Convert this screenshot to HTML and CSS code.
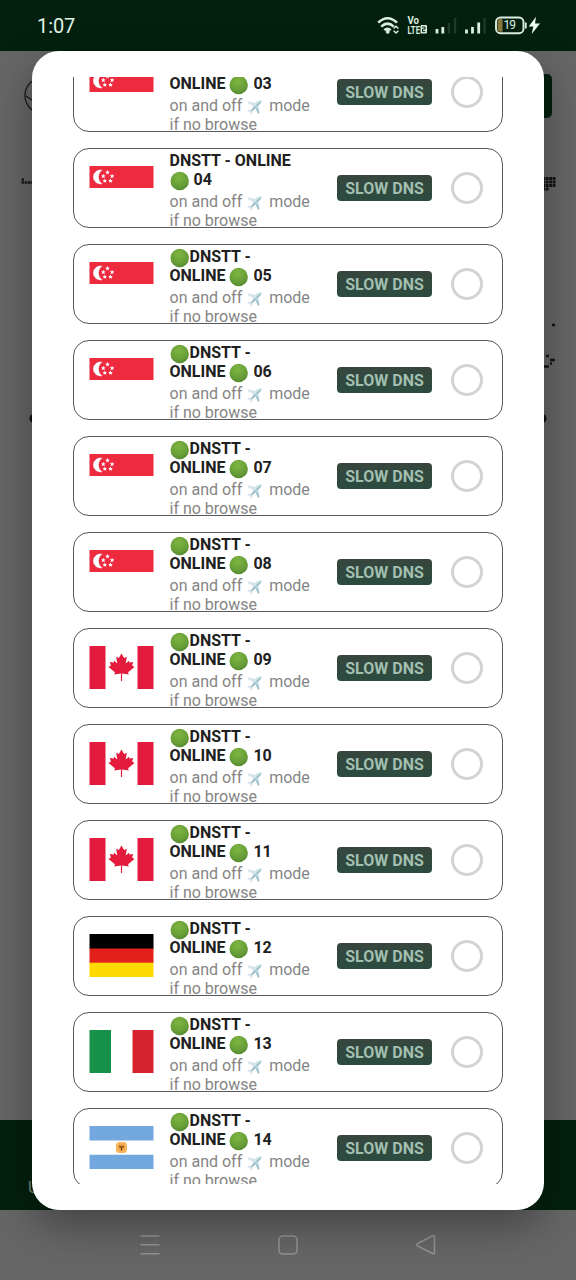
FILE: index.html
```html
<!DOCTYPE html>
<html lang="en">
<head>
<meta charset="utf-8">
<title>Servers</title>
<link rel="stylesheet" href="styles.css">
</head>
<body>
<svg class="defs" aria-hidden="true">
  <defs>
    <radialGradient id="green" cx=".45" cy=".3" r=".75"><stop offset="0" stop-color="#7fb53f"/><stop offset=".6" stop-color="#68a038"/><stop offset="1" stop-color="#54882f"/></radialGradient>
    <symbol id="dot" viewBox="0 0 20 20"><circle cx="9.700" cy="10" r="9.2" fill="url(#green)"/></symbol>
    <symbol id="plane" viewBox="0 0 17 17"><path d="M2 2.400L9 3.700L12.800 1.800Q15 .8 16 1.500Q16.500 2.600 15 4.200L12.700 7L13.800 14L12.300 15.500L9.400 10L6.300 12.600L6.200 15L5.200 15.600L4.200 13.200L1.500 12L2.200 11L4.700 11L7.300 7.200L2 4Z" fill="#cfe3e8"/><path d="M5.500 11.700L14.500 2.900M10.500 9L12.800 14.200" fill="none" stroke="#93b6c0" stroke-width="1.200"/></symbol>
    <symbol id="sg" viewBox="0 0 64 43"><rect width="64" height="22" fill="#ee2b3e"/><path d="M13 4 A7.3 7.3 0 1 0 13 18 A8.3 8.3 0 0 1 13 4Z" fill="#fff"/><g fill="#fff"><path id="st" d="M18 4.100l.65 1.500 1.600.15-1.200 1.100.4 1.600L18 7.600l-1.450.85.4-1.600-1.200-1.100 1.600-.15z"/><use href="#st" x="-4.2" y="3.7"/><use href="#st" x="4.6" y="3.7"/><use href="#st" x="-2.7" y="8.4"/><use href="#st" x="3" y="8.4"/></g></symbol>
    <symbol id="ca" viewBox="0 0 64 43"><rect width="64" height="43" fill="#fff"/><path d="M0 0H16V43H0zM48 0H64V43H48z" fill="#e31c3d"/><path d="M32 7.5L34.6 12L37.3 10.8L36.2 17.5L39.4 14.7L40 16.5L43.7 16L42.6 19.5L45 21L38.6 26.3L39.2 28.5L32.6 27.6V35H31.4V27.6L24.8 28.5L25.4 26.3L19 21L21.4 19.5L20.3 16L24 16.5L24.6 14.7L27.8 17.5L26.7 10.8L29.4 12Z" fill="#e31c3d"/></symbol>
    <symbol id="de" viewBox="0 0 64 43"><rect width="64" height="15" fill="#000"/><rect y="14.5" width="64" height="14.5" fill="#e2211c"/><rect y="28.7" width="64" height="14.3" fill="#ffda00"/></symbol>
    <symbol id="it" viewBox="0 0 64 43"><rect width="64" height="43" fill="#fff"/><rect width="21.5" height="43" fill="#159149"/><rect x="43" width="21" height="43" fill="#d7232e"/></symbol>
    <symbol id="ar" viewBox="0 0 64 43"><rect width="64" height="43" fill="#fff"/><path d="M0 0H64V14.5H0zM0 28.7H64V43H0z" fill="#72a8dd"/><rect x="26.5" y="16" width="11" height="11" rx="3.5" fill="#f6b55c"/><circle cx="32" cy="21.5" r="3.3" fill="#eb9f3c"/><path d="M29.6 20L32 21.5L34.4 20M32 21.5V24.6" fill="none" stroke="#783f18" stroke-width="1.1"/></symbol>
  </defs>
</svg>

<div class="screen">
  <header class="status">
    <span class="clock">1:07</span>
    <svg class="indicators" viewBox="0 0 164 20" width="164" height="20" aria-hidden="true">
      <g fill="none" stroke="#dcefe2" stroke-width="2.5">
        <path d="M1.2 6.700Q10.5 -2.300 20 6.700M4.2 10.600Q10.5 4.600 16.8 10.600M7.3 14.1Q10.5 11.300 13.7 14.1"/>
      </g>
      <circle cx="10.700" cy="15.700" r="2" fill="#dcefe2"/>
      <path d="M16.600 12.500L19 10.200L21.400 12.500M16.600 14.700L19 17L21.400 14.700" fill="none" stroke="#dcefe2" stroke-width="1.5"/>
      <g fill="#dcefe2" class="volte"><text x="30.5" y="8" textLength="11.500" lengthAdjust="spacingAndGlyphs">Vo</text><text x="30.500" y="17.5" textLength="12.500" lengthAdjust="spacingAndGlyphs">LTE</text></g>
      <rect x="43.5" y="9" width="6.500" height="8.5" rx="1" fill="#dcefe2"/>
      <path d="M45 11H48V13.2H45.5V15.6H48.300" fill="none" stroke="#03200e" stroke-width="1"/>
      <path d="M60 13V17.5M65.800 11V17.5M89.500 13.500V17.5M95.500 11V17.5M101.700 6.500V17.5" stroke="#dcefe2" stroke-width="2.8"/>
      <path d="M72 7V17.5M78 2V17.5M107.500 2V17.5" stroke="#203a2b" stroke-width="2.4"/>
      <rect x="119" y="1.500" width="27.500" height="15.700" rx="4.500" fill="none" stroke="#dcefe2" stroke-width="1.900"/>
      <path d="M125.500 3H123.300Q120.500 3 120.500 6V13Q120.500 15.700 123.300 15.700H125.500Z" fill="#8a793f"/>
      <path d="M148.800 6.500V12.500" stroke="#dcefe2" stroke-width="1.800"/>
      <text x="126.500" y="13.200" class="charge" fill="#dcefe2" textLength="12.500">19</text>
      <path d="M159 .8L151.700 10.500H156.300L154.700 18L163 7.500H158Z" fill="#eefff3"/>
    </svg>
  </header>

  <main class="page">
    <svg class="backdrop" viewBox="0 0 576 1069" width="576" height="1069" aria-hidden="true">
      <g fill="none" stroke="#171717" stroke-width="1.200"><circle cx="43" cy="44.500" r="18"/><path d="M26 45Q32 49 40 54"/></g>
      <rect x="500" y="23" width="52" height="44" rx="5" fill="#03200e"/>
      <path d="M21.500 128.500H24M21.500 131.500H34" stroke="#191919" stroke-width="2.600" stroke-dasharray="2.600 .6"/>
      <path d="M542 127.500H555.500M542 131H555.500M542 134.500H555.500M542 138H549" stroke="#141414" stroke-width="3" stroke-dasharray="3 .6"/>
      <path d="M552 274H555M546 305H549M550 309H555M550 312.500H552M543 315.500H549" stroke="#141414" stroke-width="2.600"/>
      <circle cx="34" cy="367.500" r="4.500" fill="#111"/><circle cx="542" cy="367.500" r="4.500" fill="#111"/>
    </svg>
  </main>
  <footer class="bottombar"><span>U</span></footer>
  <nav class="sysnav">
    <svg width="20" height="20" viewBox="0 0 20 20"><path d="M.5 1H19.500M.5 9.800H19.500M.5 18.700H19.500"/></svg>
    <svg width="20" height="20" viewBox="0 0 20 20"><rect x="1" y="1" width="18" height="18" rx="4"/></svg>
    <svg width="20" height="20" viewBox="0 0 20 20"><path d="M1.300 8.800L16.500 .8Q18.500 .3 18.500 2V17.500Q18.500 19.500 16.500 18.500L1.300 10.800Q.3 9.800 1.300 8.800Z"/></svg>
  </nav>

  <section class="dialog">
    <div class="list">
      <article class="card"><svg class="flag"><use href="#sg"/></svg><div class="info"><h2><span><svg class="dot"><use href="#dot"/></svg>DNSTT -</span><span>ONLINE <svg class="dot"><use href="#dot"/></svg> 03</span></h2><p><span>on and off <svg class="plane"><use href="#plane"/></svg> mode</span><span>if no browse</span></p></div><b class="tag">SLOW DNS</b><i class="radio"></i></article>
      <article class="card"><svg class="flag"><use href="#sg"/></svg><div class="info"><h2><span>DNSTT - ONLINE</span><span><svg class="dot"><use href="#dot"/></svg> 04</span></h2><p><span>on and off <svg class="plane"><use href="#plane"/></svg> mode</span><span>if no browse</span></p></div><b class="tag">SLOW DNS</b><i class="radio"></i></article>
      <article class="card"><svg class="flag"><use href="#sg"/></svg><div class="info"><h2><span><svg class="dot"><use href="#dot"/></svg>DNSTT -</span><span>ONLINE <svg class="dot"><use href="#dot"/></svg> 05</span></h2><p><span>on and off <svg class="plane"><use href="#plane"/></svg> mode</span><span>if no browse</span></p></div><b class="tag">SLOW DNS</b><i class="radio"></i></article>
      <article class="card"><svg class="flag"><use href="#sg"/></svg><div class="info"><h2><span><svg class="dot"><use href="#dot"/></svg>DNSTT -</span><span>ONLINE <svg class="dot"><use href="#dot"/></svg> 06</span></h2><p><span>on and off <svg class="plane"><use href="#plane"/></svg> mode</span><span>if no browse</span></p></div><b class="tag">SLOW DNS</b><i class="radio"></i></article>
      <article class="card"><svg class="flag"><use href="#sg"/></svg><div class="info"><h2><span><svg class="dot"><use href="#dot"/></svg>DNSTT -</span><span>ONLINE <svg class="dot"><use href="#dot"/></svg> 07</span></h2><p><span>on and off <svg class="plane"><use href="#plane"/></svg> mode</span><span>if no browse</span></p></div><b class="tag">SLOW DNS</b><i class="radio"></i></article>
      <article class="card"><svg class="flag"><use href="#sg"/></svg><div class="info"><h2><span><svg class="dot"><use href="#dot"/></svg>DNSTT -</span><span>ONLINE <svg class="dot"><use href="#dot"/></svg> 08</span></h2><p><span>on and off <svg class="plane"><use href="#plane"/></svg> mode</span><span>if no browse</span></p></div><b class="tag">SLOW DNS</b><i class="radio"></i></article>
      <article class="card"><svg class="flag"><use href="#ca"/></svg><div class="info"><h2><span><svg class="dot"><use href="#dot"/></svg>DNSTT -</span><span>ONLINE <svg class="dot"><use href="#dot"/></svg> 09</span></h2><p><span>on and off <svg class="plane"><use href="#plane"/></svg> mode</span><span>if no browse</span></p></div><b class="tag">SLOW DNS</b><i class="radio"></i></article>
      <article class="card"><svg class="flag"><use href="#ca"/></svg><div class="info"><h2><span><svg class="dot"><use href="#dot"/></svg>DNSTT -</span><span>ONLINE <svg class="dot"><use href="#dot"/></svg> 10</span></h2><p><span>on and off <svg class="plane"><use href="#plane"/></svg> mode</span><span>if no browse</span></p></div><b class="tag">SLOW DNS</b><i class="radio"></i></article>
      <article class="card"><svg class="flag"><use href="#ca"/></svg><div class="info"><h2><span><svg class="dot"><use href="#dot"/></svg>DNSTT -</span><span>ONLINE <svg class="dot"><use href="#dot"/></svg> 11</span></h2><p><span>on and off <svg class="plane"><use href="#plane"/></svg> mode</span><span>if no browse</span></p></div><b class="tag">SLOW DNS</b><i class="radio"></i></article>
      <article class="card"><svg class="flag"><use href="#de"/></svg><div class="info"><h2><span><svg class="dot"><use href="#dot"/></svg>DNSTT -</span><span>ONLINE <svg class="dot"><use href="#dot"/></svg> 12</span></h2><p><span>on and off <svg class="plane"><use href="#plane"/></svg> mode</span><span>if no browse</span></p></div><b class="tag">SLOW DNS</b><i class="radio"></i></article>
      <article class="card"><svg class="flag"><use href="#it"/></svg><div class="info"><h2><span><svg class="dot"><use href="#dot"/></svg>DNSTT -</span><span>ONLINE <svg class="dot"><use href="#dot"/></svg> 13</span></h2><p><span>on and off <svg class="plane"><use href="#plane"/></svg> mode</span><span>if no browse</span></p></div><b class="tag">SLOW DNS</b><i class="radio"></i></article>
      <article class="card"><svg class="flag"><use href="#ar"/></svg><div class="info"><h2><span><svg class="dot"><use href="#dot"/></svg>DNSTT -</span><span>ONLINE <svg class="dot"><use href="#dot"/></svg> 14</span></h2><p><span>on and off <svg class="plane"><use href="#plane"/></svg> mode</span><span>if no browse</span></p></div><b class="tag">SLOW DNS</b><i class="radio"></i></article>
    </div>
  </section>
</div>
</body>
</html>
```
FILE: styles.css
```css
* { box-sizing: border-box; }
body { margin: 0; font-family: Roboto, "Liberation Sans", sans-serif; }
.defs { position: absolute; width: 0; height: 0; }
.screen {
  position: relative;
  display: flex;
  flex-direction: column;
  width: 576px;
  height: 1280px;
  overflow: hidden;
  background: #666;
}
.status {
  display: flex;
  justify-content: space-between;
  align-items: center;
  flex: none;
  height: 51px;
  padding: 0 35px 0 37px;
  background: #03200e;
}
.clock { color: #e0f3e6; font-size: 20px; letter-spacing: -.1px; }
.indicators { display: block; }
.volte { font-size: 10px; font-weight: 700; }
.charge { font-size: 12px; }
.page { flex: none; height: 1069px; }
.backdrop { display: block; }
.bottombar {
  flex: none;
  height: 90px;
  padding: 58px 0 0 28px;
  background: #03200e;
  color: #7b8980;
  font-size: 16px;
}
.sysnav {
  flex: 1;
  display: flex;
  justify-content: center;
  align-items: center;
  gap: 118px;
}
.sysnav svg { fill: none; stroke: #929292; stroke-width: 1.6; }

/* Server picker floats over the dimmed page */
.dialog {
  position: absolute;
  top: 51px;
  left: 32px;
  width: 512px;
  height: 1158.5px;
  padding: 26px 41px 25.5px;
  border-radius: 27px;
  background: #fff;
  box-shadow: 0 15px 40px rgba(0, 0, 0, .34);
}
.list {
  display: flex;
  flex-direction: column;
  justify-content: flex-end;
  gap: 16px;
  height: 1107px;
  overflow: hidden;
}
.card {
  display: flex;
  flex: none;
  align-items: center;
  height: 80px;
  padding: 0 18px 0 15px;
  border: 1px solid #58585c;
  border-radius: 16px;
  overflow: hidden;
}
.card:last-child { margin-bottom: -4px; }
.flag { flex: none; width: 65px; height: 43px; margin-bottom: 1px; }
.info { flex: none; align-self: flex-start; width: 167.5px; margin-left: 15.5px; padding-top: 2px; }
.info span { display: block; height: 19px; white-space: nowrap; }
.info h2 {
  margin: 0;
  color: #202020;
  font-size: 16px;
  font-weight: 700;
  line-height: 19px;
}
.info p {
  margin: 3px 0 0;
  color: #858585;
  font-size: 16px;
  line-height: 19px;
}
.dot { width: 20px; height: 20px; margin: -4px 0 -3px; vertical-align: -3px; }
.plane { width: 17px; height: 17px; margin: -2px 2px -1px 0; vertical-align: -3.5px; }
.tag {
  flex: none;
  width: 95px;
  height: 26px;
  border-radius: 4px;
  background: linear-gradient(#37463e, #2b4c40);
  color: #a0bfb0;
  font-size: 16px;
  line-height: 27px;
  text-align: center;
}
.radio {
  flex: none;
  width: 32px;
  height: 32px;
  margin-left: 19px;
  border: 3px solid #d3d3d3;
  border-radius: 50%;
}
```
